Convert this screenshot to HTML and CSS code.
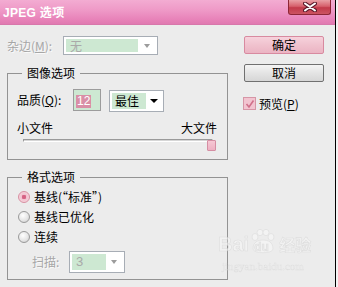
FILE: index.html
```html
<!DOCTYPE html>
<html lang="zh-CN">
<head>
<meta charset="utf-8">
<title>JPEG 选项</title>
<link rel="stylesheet" href="styles.css">
</head>
<body>
<div class="dialog">
  <div class="titlebar">
    <span class="title">JPEG 选项</span>
    <div class="close">
      <svg width="14" height="10" viewBox="0 0 14 10"><path d="M2 1.5 L12 8.5 M12 1.5 L2 8.5" stroke="#5a1a2a" stroke-width="4" stroke-linecap="round"/><path d="M2 1.5 L12 8.5 M12 1.5 L2 8.5" stroke="#ffffff" stroke-width="2" stroke-linecap="round"/></svg>
    </div>
  </div>
  <div class="content">
    <div class="left">
      <div class="row matte">
        <span class="label disabled">杂边(<u>M</u>):</span>
        <div class="select sel-matte">
          <span class="val dis">无</span>
          <span class="arrow-box"><span class="arrow grey"></span></span>
        </div>
      </div>
      <fieldset class="group g1">
        <legend>图像选项</legend>
        <div class="row quality">
          <span class="label">品质(<u>Q</u>):</span>
          <div class="input"><span class="hl">12</span></div>
          <div class="select sel-quality">
            <span class="val">最佳</span>
            <span class="arrow-box"><span class="arrow"></span></span>
          </div>
        </div>
        <div class="row sizes"><span>小文件</span><span>大文件</span></div>
        <div class="slider"><div class="track"></div><div class="thumb"></div></div>
      </fieldset>
      <fieldset class="group g2">
        <legend>格式选项</legend>
        <div class="radio-row"><span class="radio on"></span><span>基线(“标准”)</span></div>
        <div class="radio-row"><span class="radio"></span><span>基线已优化</span></div>
        <div class="radio-row"><span class="radio"></span><span>连续</span></div>
        <div class="row scan">
          <span class="label disabled">扫描:</span>
          <div class="select sel-scan">
            <span class="val dis">3</span>
            <span class="arrow-box"><span class="arrow grey"></span></span>
          </div>
        </div>
      </fieldset>
    </div>
    <div class="right">
      <div class="btn primary">确定</div>
      <div class="btn">取消</div>
      <div class="check-row">
        <span class="check"><svg width="10" height="10" viewBox="0 0 10 10"><path d="M1.5 5 L4 8 L8.5 1.5" fill="none" stroke="#d0708a" stroke-width="1.6"/></svg></span>
        <span>预览(<u>P</u>)</span>
      </div>
    </div>
  </div>
  <div class="watermark">
    <div class="wm-top">
      <span class="wm-bai">Bai</span>
      <span class="wm-paw">
        <svg width="28" height="26" viewBox="0 0 28 26">
          <g fill="#f8f8f8" stroke="#d8d8d8" stroke-width="0.8">
            <ellipse cx="6" cy="8" rx="3" ry="3.5"/>
            <ellipse cx="11" cy="3.5" rx="3" ry="3.2"/>
            <ellipse cx="17" cy="3.5" rx="3" ry="3.2"/>
            <ellipse cx="22" cy="8" rx="3" ry="3.5"/>
            <path d="M4 20 C4 13 9 11 14 11 C19 11 24 13 24 20 C24 25 4 25 4 20 Z"/>
          </g>
        </svg>
        <span class="wm-du">du</span>
      </span>
      <span class="wm-jy">经验</span>
    </div>
    <div class="wm-url">jingyan.baidu.com</div>
  </div>
</div>
</body>
</html>
```

FILE: styles.css
```css
html, body {
  margin: 0;
  padding: 0;
  background: #f3f3f3;
}
body {
  font-family: "Noto Sans CJK SC", "Liberation Sans", sans-serif;
  font-size: 12px;
  line-height: 14px;
  color: #000;
}
u { text-decoration: underline; text-underline-offset: 1px; }

.dialog {
  position: relative;
  width: 335px;
  height: 287px;
  border-right: 1px solid #000;
  background: #ececec;
  overflow: hidden;
}

.titlebar {
  height: 25px;
  display: flex;
  justify-content: space-between;
  align-items: flex-start;
  background: linear-gradient(#f3acd2 0%, #ee98c6 45%, #e883b9 80%, #e07ab1 100%);
  border-bottom: 1px solid #d877ab;
  box-sizing: border-box;
}
.title {
  color: #fff;
  font-family: "Liberation Sans", "Noto Sans CJK SC", sans-serif;
  font-weight: bold;
  font-size: 12px;
  line-height: 14px;
  padding: 6px 0 0 3px;
  letter-spacing: 0.3px;
}
.close {
  width: 43px;
  height: 15px;
  margin-right: 4px;
  box-sizing: border-box;
  border: 1px solid #8e2636;
  border-top: none;
  border-radius: 0 0 3px 3px;
  background: linear-gradient(#e9a0a6 0%, #d6606c 45%, #c23a4a 55%, #cc5462 100%);
  display: flex;
  justify-content: center;
  align-items: center;
}
.close svg { display: block; margin-top: -1px; }

.content {
  display: flex;
  padding: 11px 0 0 7px;
}
.left {
  width: 221px;
  display: flex;
  flex-direction: column;
}
.right {
  width: 80px;
  margin-left: 16px;
  display: flex;
  flex-direction: column;
}

.row {
  display: flex;
  align-items: center;
}
.label.disabled { color: #a6a6a6; text-shadow: 1px 1px 0 #fafafa; }

.matte { height: 19px; }
.matte .label { width: 56px; }

.select {
  display: flex;
  box-sizing: border-box;
  border: 1px solid #a7adb5;
  background: #fff;
  padding: 2px;
}
.select .val {
  background: #cde8d2;
  display: flex;
  align-items: center;
}
.val.dis { color: #a9a9a9; }
.arrow-box {
  flex: 1;
  display: flex;
  justify-content: center;
  align-items: center;
}
.arrow {
  width: 0;
  height: 0;
  border-left: 4px solid transparent;
  border-right: 4px solid transparent;
  border-top: 4px solid #000;
}
.arrow.grey { border-top-color: #9c9c9c; border-left-width: 3.5px; border-right-width: 3.5px; }

.sel-matte { width: 95px; height: 19px; }
.sel-matte .val { width: 72px; padding-left: 4px; box-sizing: border-box; }

.group {
  margin: 0;
  border: 1px solid #939393;
  padding: 0 9px 8px 9px;
  box-sizing: border-box;
  width: 221px;
}
.group legend {
  padding: 0 5px;
  margin-left: 5px;
  line-height: 14px;
}
.g1 { margin-top: 11px; }
.g2 { margin-top: 10px; padding-bottom: 6px; }

.quality {
  margin-top: 9px;
  height: 22px;
  align-items: flex-start;
}
.quality .label { width: 56px; margin-top: 4px; }
.input {
  width: 28px;
  height: 22px;
  box-sizing: border-box;
  border: 1px solid #9c9c9c;
  background: #cde8d2;
  padding: 3px 0 0 2px;
}
.input .hl {
  display: inline-block;
  background: #d98fa6;
  color: #fff;
  height: 13px;
  line-height: 13px;
  padding: 0 1px;
  font-family: "Liberation Sans", sans-serif;
  font-size: 12px;
}
.sel-quality {
  width: 55px;
  height: 22px;
  margin-left: 8px;
  margin-top: 1px;
}
.sel-quality .val { width: 34px; padding-left: 3px; box-sizing: border-box; }

.sizes {
  margin-top: 10px;
  height: 14px;
  justify-content: space-between;
  padding-right: 1px;
}

.slider {
  position: relative;
  height: 12px;
  margin-top: 1px;
}
.track {
  margin: 4px 5px 0 6px;
  height: 3px;
  box-sizing: border-box;
  border-top: 1px solid #9a9a9a;
  border-left: 1px solid #9a9a9a;
  border-bottom: 1px solid #fff;
  border-right: 1px solid #fff;
  background: #d6d6d6;
}
.thumb {
  position: absolute;
  left: 190px;
  top: 1px;
  width: 9px;
  height: 11px;
  box-sizing: border-box;
  border: 1px solid #d58ea3;
  border-radius: 1px;
  background: linear-gradient(#f6c8d4, #eeb0c2);
}

.radio-row {
  display: flex;
  align-items: center;
  height: 20px;
}
.g2 .radio-row:first-of-type { margin-top: 3px; }
.radio {
  width: 12px;
  height: 12px;
  box-sizing: border-box;
  border-radius: 50%;
  border: 1px solid #9a9a9a;
  background: radial-gradient(circle at 40% 35%, #ffffff 0%, #e6e6e6 55%, #c8c8c8 100%);
  margin: 0 4px 0 1px;
  position: relative;
}
.radio.on {
  border-color: #d890a2;
  background: radial-gradient(circle at 50% 50%, #d45e7e 0%, #d8688a 28%, #f2c2cf 36%, #f8dde4 100%);
}

.scan {
  margin-top: 4px;
  height: 22px;
}
.scan .label { margin-left: 15px; width: 37px; }
.sel-scan { width: 56px; height: 22px; }
.sel-scan .val { width: 34px; padding-left: 4px; box-sizing: border-box; font-family: "Liberation Sans", sans-serif; font-size: 13px; }

.btn {
  height: 18px;
  box-sizing: border-box;
  border: 1px solid #707070;
  border-radius: 2px;
  background: linear-gradient(#f4f4f4, #e4e4e4 50%, #d6d6d6);
  display: flex;
  align-items: center;
  justify-content: center;
}
.btn.primary {
  border-color: #d88aa0;
  background: linear-gradient(#f6d2dc, #f0c2ce 50%, #ebb4c3);
}
.btn + .btn { margin-top: 10px; }

.check-row {
  display: flex;
  align-items: center;
  margin-top: 15px;
  margin-left: -1px;
  height: 13px;
}
.check {
  width: 13px;
  height: 13px;
  box-sizing: border-box;
  border: 1px solid #d696a6;
  background: #f2c4d0;
  display: flex;
  align-items: center;
  justify-content: center;
  margin-right: 3px;
}
.check svg { display: block; }

.watermark {
  position: absolute;
  left: 218px;
  top: 229px;
  width: 96px;
  opacity: 0.6;
  pointer-events: none;
}
.wm-top {
  display: flex;
  align-items: flex-end;
  height: 26px;
}
.wm-bai, .wm-du, .wm-jy {
  color: #f7f7f7;
  font-weight: bold;
  -webkit-text-stroke: 0.6px #d4d4d4;
}
.wm-bai {
  font-family: "Liberation Sans", sans-serif;
  font-size: 20px;
  line-height: 22px;
}
.wm-paw {
  position: relative;
  width: 28px;
  height: 26px;
}
.wm-paw svg { display: block; }
.wm-du {
  position: absolute;
  left: 5px;
  top: 11px;
  font-family: "Liberation Sans", sans-serif;
  font-size: 12px;
  line-height: 14px;
  color: #ececec;
}
.wm-jy {
  font-size: 16px;
  line-height: 22px;
  margin-left: 2px;
}
.wm-url {
  margin-top: 6px;
  margin-left: 4px;
  font-family: "Liberation Serif", serif;
  font-size: 11px;
  line-height: 11px;
  color: #f7f7f7;
  -webkit-text-stroke: 0.4px #d4d4d4;
}
```
